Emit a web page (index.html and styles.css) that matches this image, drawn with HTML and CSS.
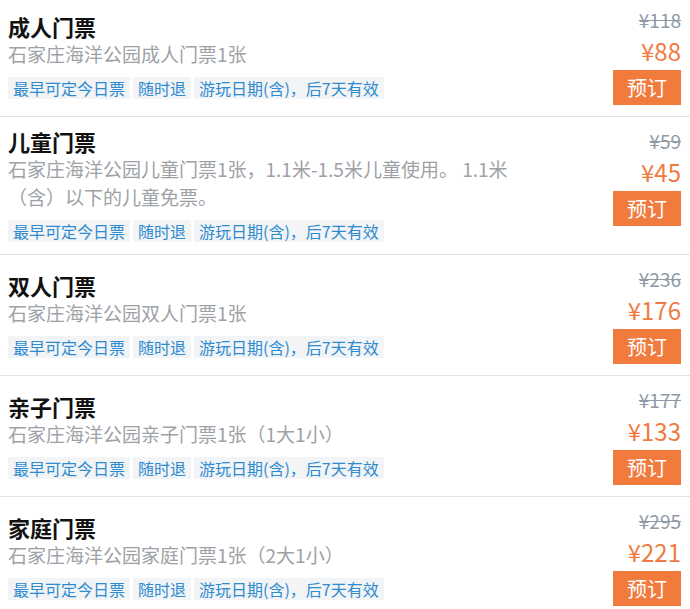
FILE: index.html
```html
<!DOCTYPE html>
<html lang="zh-CN">
<head>
<meta charset="utf-8">
<title>门票</title>
<link rel="stylesheet" href="styles.css">
</head>
<body>
<div class="list">
  <div class="row">
    <div class="info">
      <div class="title">成人门票</div>
      <div class="desc">石家庄海洋公园成人门票1张</div>
      <div class="tags"><span class="tag">最早可定今日票</span><span class="tag">随时退</span><span class="tag">游玩日期(含)，后7天有效</span></div>
    </div>
    <div class="side">
      <div class="old">¥118</div>
      <div class="price">¥88</div>
      <div class="btn">预订</div>
    </div>
  </div>
  <div class="row">
    <div class="info">
      <div class="title">儿童门票</div>
      <div class="desc">石家庄海洋公园儿童门票1张，1.1米-1.5米儿童使用。 1.1米（含）以下的儿童免票。</div>
      <div class="tags"><span class="tag">最早可定今日票</span><span class="tag">随时退</span><span class="tag">游玩日期(含)，后7天有效</span></div>
    </div>
    <div class="side">
      <div class="old">¥59</div>
      <div class="price">¥45</div>
      <div class="btn">预订</div>
    </div>
  </div>
  <div class="row">
    <div class="info">
      <div class="title">双人门票</div>
      <div class="desc">石家庄海洋公园双人门票1张</div>
      <div class="tags"><span class="tag">最早可定今日票</span><span class="tag">随时退</span><span class="tag">游玩日期(含)，后7天有效</span></div>
    </div>
    <div class="side">
      <div class="old">¥236</div>
      <div class="price">¥176</div>
      <div class="btn">预订</div>
    </div>
  </div>
  <div class="row">
    <div class="info">
      <div class="title">亲子门票</div>
      <div class="desc">石家庄海洋公园亲子门票1张（1大1小）</div>
      <div class="tags"><span class="tag">最早可定今日票</span><span class="tag">随时退</span><span class="tag">游玩日期(含)，后7天有效</span></div>
    </div>
    <div class="side">
      <div class="old">¥177</div>
      <div class="price">¥133</div>
      <div class="btn">预订</div>
    </div>
  </div>
  <div class="row">
    <div class="info">
      <div class="title">家庭门票</div>
      <div class="desc">石家庄海洋公园家庭门票1张（2大1小）</div>
      <div class="tags"><span class="tag">最早可定今日票</span><span class="tag">随时退</span><span class="tag">游玩日期(含)，后7天有效</span></div>
    </div>
    <div class="side">
      <div class="old">¥295</div>
      <div class="price">¥221</div>
      <div class="btn">预订</div>
    </div>
  </div>
</div>
</body>
</html>
```

FILE: styles.css
```css
html, body {
  margin: 0;
  padding: 0;
  background: #ffffff;
}

body {
  font-family: "Noto Sans CJK SC", "Noto Sans", sans-serif;
  color: #111111;
}

.list {
  margin-top: -5px;
}

.row {
  display: flex;
  align-items: center;
  padding: 10px 9px 9px 8px;
  border-top: 1px solid #e3e3e3;
}

.info {
  flex: 1;
  min-width: 0;
  margin-right: 97px;
  padding-bottom: 3px;
}

.title {
  font-size: 22px;
  line-height: 28px;
  font-weight: 700;
  color: #111111;
}

.desc {
  font-size: 19px;
  line-height: 28px;
  color: #9ea2a7;
}

.tags {
  display: flex;
  gap: 3px;
  margin-top: 9px;
}

.tag {
  font-size: 16px;
  line-height: 22px;
  padding: 0 5px;
  background: #f2f4f6;
  color: #2f8bd0;
  white-space: nowrap;
}

.side {
  align-self: flex-start;
  display: flex;
  flex-direction: column;
  align-items: flex-end;
  margin-top: 2px;
  padding-bottom: 2px;
}

.old {
  font-size: 19px;
  line-height: 24px;
  color: #8e9aa6;
  text-decoration: line-through;
}

.price {
  font-size: 24px;
  line-height: 38px;
  color: #ef7b41;
}

.btn {
  height: 35px;
  line-height: 35px;
  padding: 0 14px;
  font-size: 20px;
  background: #f17a3d;
  color: #ffffff;
}
```
